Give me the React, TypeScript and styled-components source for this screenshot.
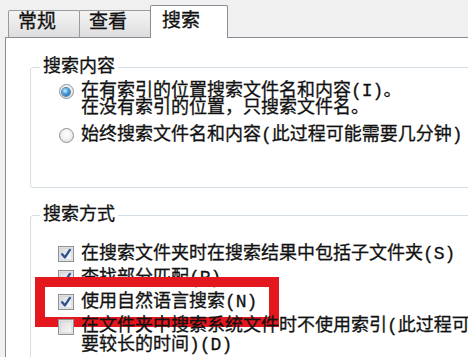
import React from "react";
import styled, { createGlobalStyle } from "styled-components";

const Global = createGlobalStyle`
  html, body { margin: 0; padding: 0; background: #f0f0f0; overflow: hidden; }
  body {
    font-family: "Liberation Mono", "Noto Sans CJK SC", monospace;
    color: #111111;
    -webkit-text-stroke: 0.3px #111111;
  }
`;

const Window = styled.div`
  width: 468px;
  height: 357px;
  overflow: hidden;
  display: flex;
  flex-direction: column;
  background: #f0f0f0;
`;

const TabStrip = styled.div`
  display: flex;
  align-items: flex-end;
  height: 37px;
  padding-left: 8px;
  position: relative;
  z-index: 1;
  flex-shrink: 0;
`;

const Tab = styled.div<{ $active?: boolean }>`
  box-sizing: border-box;
  width: ${(p) => (p.$active ? 78 : 72)}px;
  height: ${(p) => (p.$active ? 33 : 27)}px;
  margin-bottom: ${(p) => (p.$active ? -1 : 0)}px;
  padding: ${(p) => (p.$active ? "6px 0 0 11px" : "2px 0 0 9px")};
  border: 1px solid ${(p) => (p.$active ? "#898c95" : "#9a9a9a")};
  border-bottom: none;
  border-radius: 2px 2px 0 0;
  background: ${(p) =>
    p.$active ? "#ffffff" : "linear-gradient(#f4f4f4, #e9e9e9 50%, #dddddd)"};
  font-size: 19px;
  line-height: 21px;
  white-space: nowrap;
  & + & { margin-left: -1px; }
`;

const Panel = styled.div`
  flex: 1;
  margin-left: 5px;
  border-top: 1px solid #898c95;
  border-left: 1px solid #898c95;
  background: #ffffff;
  padding: 19px 0 0 24px;
  display: flex;
  flex-direction: column;
`;

const GroupBox = styled.fieldset<{ $bottom: number }>`
  margin: 0;
  width: 470px;
  box-sizing: border-box;
  border: 1px solid #d5dfe5;
  border-radius: 3px;
  padding: 0 0 ${(p) => p.$bottom}px 9px;
  min-width: 0;
  & + & { margin-top: 17px; }
`;

const Legend = styled.legend`
  padding: 0 3px;
  font-size: 18px;
  line-height: 20px;
`;

const Options = styled.div<{ $top: number; $gap: number }>`
  display: flex;
  flex-direction: column;
  padding: ${(p) => p.$top}px 0 0 17px;
  gap: ${(p) => p.$gap}px;
`;

const Row = styled.div<{ $lh: number }>`
  position: relative;
  display: flex;
  align-items: flex-start;
  gap: 6px;
  font-size: 18px;
  line-height: ${(p) => p.$lh}px;
  white-space: nowrap;
`;

const Control = styled.span<{ $lh: number }>`
  flex: none;
  width: 18px;
  height: ${(p) => p.$lh}px;
  display: flex;
  align-items: center;
  justify-content: center;
  -webkit-text-stroke: 0;
`;

const Label = styled.span<{ $wrap?: boolean }>`
  display: block;
  flex: none;
  white-space: ${(p) => (p.$wrap ? "normal" : "nowrap")};
  width: ${(p) => (p.$wrap ? "436px" : "auto")};
`;

const RadioOuter = styled.span`
  box-sizing: border-box;
  width: 15px;
  height: 15px;
  border-radius: 50%;
  border: 1px solid #8e9296;
  background: radial-gradient(circle at 50% 40%, #ffffff 0, #f2f2f2 45%, #d2d4d6 100%);
  display: flex;
  align-items: center;
  justify-content: center;
`;

const RadioDot = styled.span`
  width: 8px;
  height: 8px;
  border-radius: 50%;
  background: radial-gradient(circle at 40% 35%, #d8f3ff 0, #57b1ea 35%, #1d6bb3 75%, #14487e 100%);
  box-shadow: 0 0 0 1px #5c7fa0;
`;

const Highlight = styled.span`
  position: absolute;
  left: -22px;
  top: -16px;
  width: 244px;
  height: 50px;
  box-sizing: border-box;
  border: 10px solid #e5171e;
  pointer-events: none;
`;

const Radio = ({ checked }: { checked?: boolean }) => (
  <RadioOuter>{checked && <RadioDot />}</RadioOuter>
);

const Check = ({ checked }: { checked?: boolean }) => (
  <svg width="16" height="16" viewBox="0 0 16 16">
    <defs>
      <linearGradient id="cbg" x1="0" y1="0" x2="1" y2="1">
        <stop offset="0" stopColor="#d9dadb" />
        <stop offset="1" stopColor="#fbfbfb" />
      </linearGradient>
    </defs>
    <rect x="0.5" y="0.5" width="15" height="15" fill="#f4f4f4" stroke="#8e9296" />
    <rect x="2" y="2" width="12" height="12" fill="url(#cbg)" stroke="#c4c7ca" strokeWidth="0.8" />
    {checked && (
      <path
        d="M4.2 8.2 L6.9 11.4 L11.9 3.9"
        fill="none"
        stroke="#2c4f93"
        strokeWidth="2.3"
        strokeLinecap="round"
        strokeLinejoin="round"
      />
    )}
  </svg>
);

export default function App() {
  return (
    <>
      <Global />
      <Window>
        <TabStrip>
          <Tab>常规</Tab>
          <Tab>查看</Tab>
          <Tab $active>搜索</Tab>
        </TabStrip>
        <Panel>
          <GroupBox $bottom={43}>
            <Legend>搜索内容</Legend>
            <Options $top={6} $gap={10}>
              <Row $lh={17}>
                <Control $lh={17}>
                  <Radio checked />
                </Control>
                <Label>
                  在有索引的位置搜索文件名和内容(I)。
                  <br />
                  在没有索引的位置，只搜索文件名。
                </Label>
              </Row>
              <Row $lh={17}>
                <Control $lh={17}>
                  <Radio />
                </Control>
                <Label>始终搜索文件名和内容(此过程可能需要几分钟)</Label>
              </Row>
            </Options>
          </GroupBox>
          <GroupBox $bottom={20}>
            <Legend>搜索方式</Legend>
            <Options $top={20} $gap={6}>
              <Row $lh={18}>
                <Control $lh={18}>
                  <Check checked />
                </Control>
                <Label>在搜索文件夹时在搜索结果中包括子文件夹(S)</Label>
              </Row>
              <Row $lh={18}>
                <Control $lh={18}>
                  <Check checked />
                </Control>
                <Label>查找部分匹配(P)</Label>
              </Row>
              <Row $lh={18}>
                <Control $lh={18}>
                  <Check checked />
                </Control>
                <Label>使用自然语言搜索(N)</Label>
                <Highlight />
              </Row>
              <Row $lh={19}>
                <Control $lh={19}>
                  <Check />
                </Control>
                <Label $wrap>在文件夹中搜索系统文件时不使用索引(此过程可能需要较长的时间)(D)</Label>
              </Row>
            </Options>
          </GroupBox>
        </Panel>
      </Window>
    </>
  );
}
